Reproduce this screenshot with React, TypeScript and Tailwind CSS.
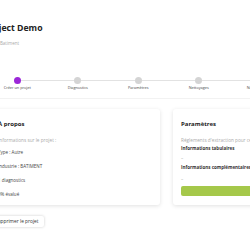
import React from "react";

const steps = ["Créer un projet", "Diagnostics", "Paramètres", "Nettoyages", "Normalisation"];

export default function App() {
  return (
    <div className="h-[250px] w-[250px] overflow-hidden bg-white font-['Open_Sans',sans-serif] text-[#333]">
      <div className="w-[400px] pt-[22px]">
        <h1 className="-ml-[16px] text-[8.7px] font-bold leading-[12px] text-[#222]">Project Demo</h1>
        <p className="-ml-[15px] mt-[6px] text-[4.5px] leading-[6px] text-[#aaa]">Audit - Batiment</p>
      </div>

      {/* stepper */}
      <div className="-ml-[13px] mt-[31px] w-[420px] border-b border-[#f2f2f2] pb-[7px]">
        <div className="grid grid-cols-[repeat(7,60.5px)]">
          {steps.map((s, i) => (
            <div key={s} className="flex flex-col items-center">
              <div className="flex h-[7px] w-full items-center">
                <div className={i === 0 ? "h-px flex-1" : "h-px flex-1 bg-[#e2e2e2]"} />
                <div
                  className={
                    i === 0
                      ? "h-[7px] w-[7px] rounded-full bg-[#9b27d8]"
                      : "h-[7px] w-[7px] rounded-full bg-[#d4d4d4]"
                  }
                />
                <div className="h-px flex-1 bg-[#e2e2e2]" />
              </div>
              <span className="mt-[1px] text-[3.8px] leading-[6px] text-[#444]">{s}</span>
            </div>
          ))}
        </div>
      </div>

      {/* cards */}
      <div className="-ml-[10px] mt-[10px] flex w-[400px] gap-[13px]">
        <div className="h-[96px] w-[170px] rounded-[3px] bg-white px-[8px] pt-[11px] shadow-[0_1px_4px_rgba(0,0,0,0.12)]">
          <h2 className="text-[6px] font-bold leading-[9px] text-[#222]">À propos</h2>
          <p className="mt-[8px] text-[4.7px] leading-[6px] text-[#aaa]">Informations sur le projet :</p>
          <div className="mt-[6px] flex flex-col gap-[8px] text-[4.5px] leading-[6px] text-[#444]">
            <span>Type : Autre</span>
            <span>Industrie : BATIMENT</span>
            <span>1 diagnostics</span>
            <span>0% évalué</span>
          </div>
        </div>
        <div className="h-[96px] w-[172px] rounded-[3px] bg-white px-[8px] pt-[11px] shadow-[0_1px_4px_rgba(0,0,0,0.12)]">
          <h2 className="text-[6px] font-bold leading-[9px] text-[#222]">Paramètres</h2>
          <p className="mt-[8px] whitespace-nowrap text-[4.7px] leading-[6px] text-[#aaa]">
            Réglements d'extraction pour ce projet
          </p>
          <p className="mt-[2px] text-[4.5px] font-bold leading-[6px] text-[#333]">Informations tabulaires</p>
          <p className="mt-[4px] text-[4.5px] leading-[6px] text-[#aaa]">–</p>
          <p className="mt-[3px] text-[4.5px] font-bold leading-[6px] text-[#333]">Informations complémentaires</p>
          <p className="mt-[6px] text-[4.5px] leading-[6px] text-[#aaa]">–</p>
          <div className="mt-[4px] h-[10px] w-full rounded-[2px] bg-[#a5c84a]" />
        </div>
      </div>

      <button className="-ml-[10px] mt-[9px] h-[11px] rounded-[2px] bg-white px-[5px] text-[4.8px] leading-[11px] text-[#333] shadow-[0_0_3px_rgba(0,0,0,0.2)]">
        Supprimer le projet
      </button>
    </div>
  );
}
